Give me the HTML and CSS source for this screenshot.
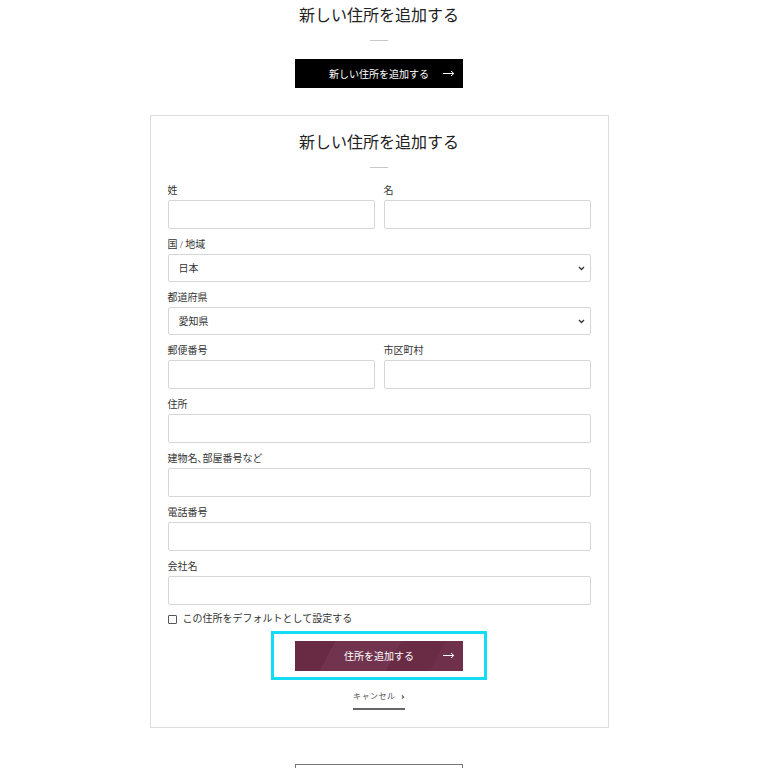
FILE: index.html
```html
<!DOCTYPE html>
<html lang="ja">
<head>
  <meta charset="UTF-8">
  <meta name="viewport" content="width=device-width, initial-scale=1.0">
  <title>新しい住所を追加する</title>
  <link rel="stylesheet" href="styles.css">
</head>
<body>
  <div class="page">
    <h1 class="title">新しい住所を追加する</h1>
    <div class="rule"></div>
    <button class="btn btn-black">新しい住所を追加する<svg class="arrow" width="12" height="7" viewBox="0 0 12 7"><path d="M0 3.5h10.5M8 1l2.8 2.5L8 6" fill="none" stroke="#fff" stroke-width="1"/></svg></button>

    <form class="card">
      <h2 class="title">新しい住所を追加する</h2>
      <div class="rule"></div>

      <div class="row">
        <div class="field">
          <label>姓</label>
          <input type="text">
        </div>
        <div class="field">
          <label>名</label>
          <input type="text">
        </div>
      </div>

      <div class="field">
        <label>国 / 地域</label>
        <div class="select-wrap">
          <select><option>日本</option></select>
          <svg class="chevron" width="7" height="5" viewBox="0 0 7 5"><path d="M1 1l2.5 2.5L6 1" fill="none" stroke="#333" stroke-width="1.3"/></svg>
        </div>
      </div>

      <div class="field">
        <label>都道府県</label>
        <div class="select-wrap">
          <select><option>愛知県</option></select>
          <svg class="chevron" width="7" height="5" viewBox="0 0 7 5"><path d="M1 1l2.5 2.5L6 1" fill="none" stroke="#333" stroke-width="1.3"/></svg>
        </div>
      </div>

      <div class="row">
        <div class="field">
          <label>郵便番号</label>
          <input type="text">
        </div>
        <div class="field">
          <label>市区町村</label>
          <input type="text">
        </div>
      </div>

      <div class="field">
        <label>住所</label>
        <input type="text">
      </div>

      <div class="field">
        <label>建物名､部屋番号など</label>
        <input type="text">
      </div>

      <div class="field">
        <label>電話番号</label>
        <input type="text">
      </div>

      <div class="field">
        <label>会社名</label>
        <input type="text">
      </div>

      <label class="check"><span class="box"></span>この住所をデフォルトとして設定する</label>

      <div class="focus-ring">
        <button type="button" class="btn btn-wine">住所を追加する<svg class="arrow" width="12" height="7" viewBox="0 0 12 7"><path d="M0 3.5h10.5M8 1l2.8 2.5L8 6" fill="none" stroke="#fff" stroke-width="1"/></svg></button>
      </div>

      <a class="cancel" href="#">キャンセル <b>&rsaquo;</b></a>
    </form>

    <button class="btn btn-outline"></button>
  </div>
</body>
</html>
```

FILE: styles.css
```css
body {
  margin: 0;
  background: #fff;
  color: #222;
  font-family: "Liberation Serif", "Noto Sans CJK JP", serif;
}

.page {
  width: 758px;
  display: flex;
  flex-direction: column;
  align-items: center;
  padding-top: 6px;
}

.page > * {
  flex-shrink: 0;
}

.title {
  margin: 0;
  font-size: 16px;
  line-height: 20px;
  font-weight: 400;
  color: #222;
  text-align: center;
}

.rule {
  width: 18px;
  height: 1px;
  background: #c8c8c8;
  margin: 14px auto 18px;
}

.btn {
  position: relative;
  width: 168px;
  height: 29px;
  border: none;
  padding: 0;
  font-family: inherit;
  font-size: 10px;
  color: #fff;
  cursor: pointer;
}

.btn .arrow {
  position: absolute;
  right: 8px;
  top: 50%;
  margin-top: -4px;
}

.btn-black {
  background: #000;
}

.card {
  box-sizing: border-box;
  width: 459px;
  margin-top: 27px;
  border: 1px solid #dcdcdc;
  padding: 17px 17px 17px;
  display: flex;
  flex-direction: column;
}

.card .rule {
  margin-bottom: 17px;
}

.row {
  display: flex;
  gap: 9px;
}

.row .field {
  flex: 1;
}

.field {
  display: flex;
  flex-direction: column;
  margin-bottom: 10px;
}

.field label {
  font-size: 10px;
  line-height: 12px;
  color: #333;
  margin-bottom: 3px;
}

.field input,
.field select {
  box-sizing: border-box;
  width: 100%;
  height: 29px;
  border: 1px solid #d6d6d6;
  border-radius: 2px;
  background: #fff;
  font-family: inherit;
  font-size: 10px;
  color: #333;
  padding: 0 10px;
  margin: 0;
}

.field select {
  height: 28px;
  appearance: none;
  -webkit-appearance: none;
}

.select-wrap {
  position: relative;
}

.chevron {
  position: absolute;
  right: 6px;
  top: 12px;
}

.check {
  display: flex;
  align-items: center;
  gap: 6px;
  margin-top: -2px;
  font-size: 10px;
  line-height: 12px;
  color: #333;
}

.check .box {
  box-sizing: border-box;
  width: 9px;
  height: 9px;
  border: 1px solid #555;
  border-radius: 1px;
}

.focus-ring {
  box-sizing: border-box;
  align-self: center;
  width: 216px;
  height: 49px;
  margin-top: 6px;
  border: 3px solid #14dcf4;
  display: flex;
  align-items: center;
  justify-content: center;
}

.btn-wine {
  height: 30px;
  background: linear-gradient(118deg, #692b44 0 22%, #71334d 22% 58%, #6a2c45 58% 82%, #6e304a 82%);
}

.cancel {
  align-self: center;
  margin-top: 9px;
  padding-bottom: 5px;
  border-bottom: 2px solid #666;
  font-size: 8px;
  line-height: 12px;
  color: #555;
  text-decoration: none;
  letter-spacing: 0.5px;
}

.cancel b {
  font-size: 11px;
  margin-left: 3px;
  color: #333;
}

.btn-outline {
  box-sizing: border-box;
  margin-top: 36px;
  background: #fff;
  border: 1px solid #777;
}
```
